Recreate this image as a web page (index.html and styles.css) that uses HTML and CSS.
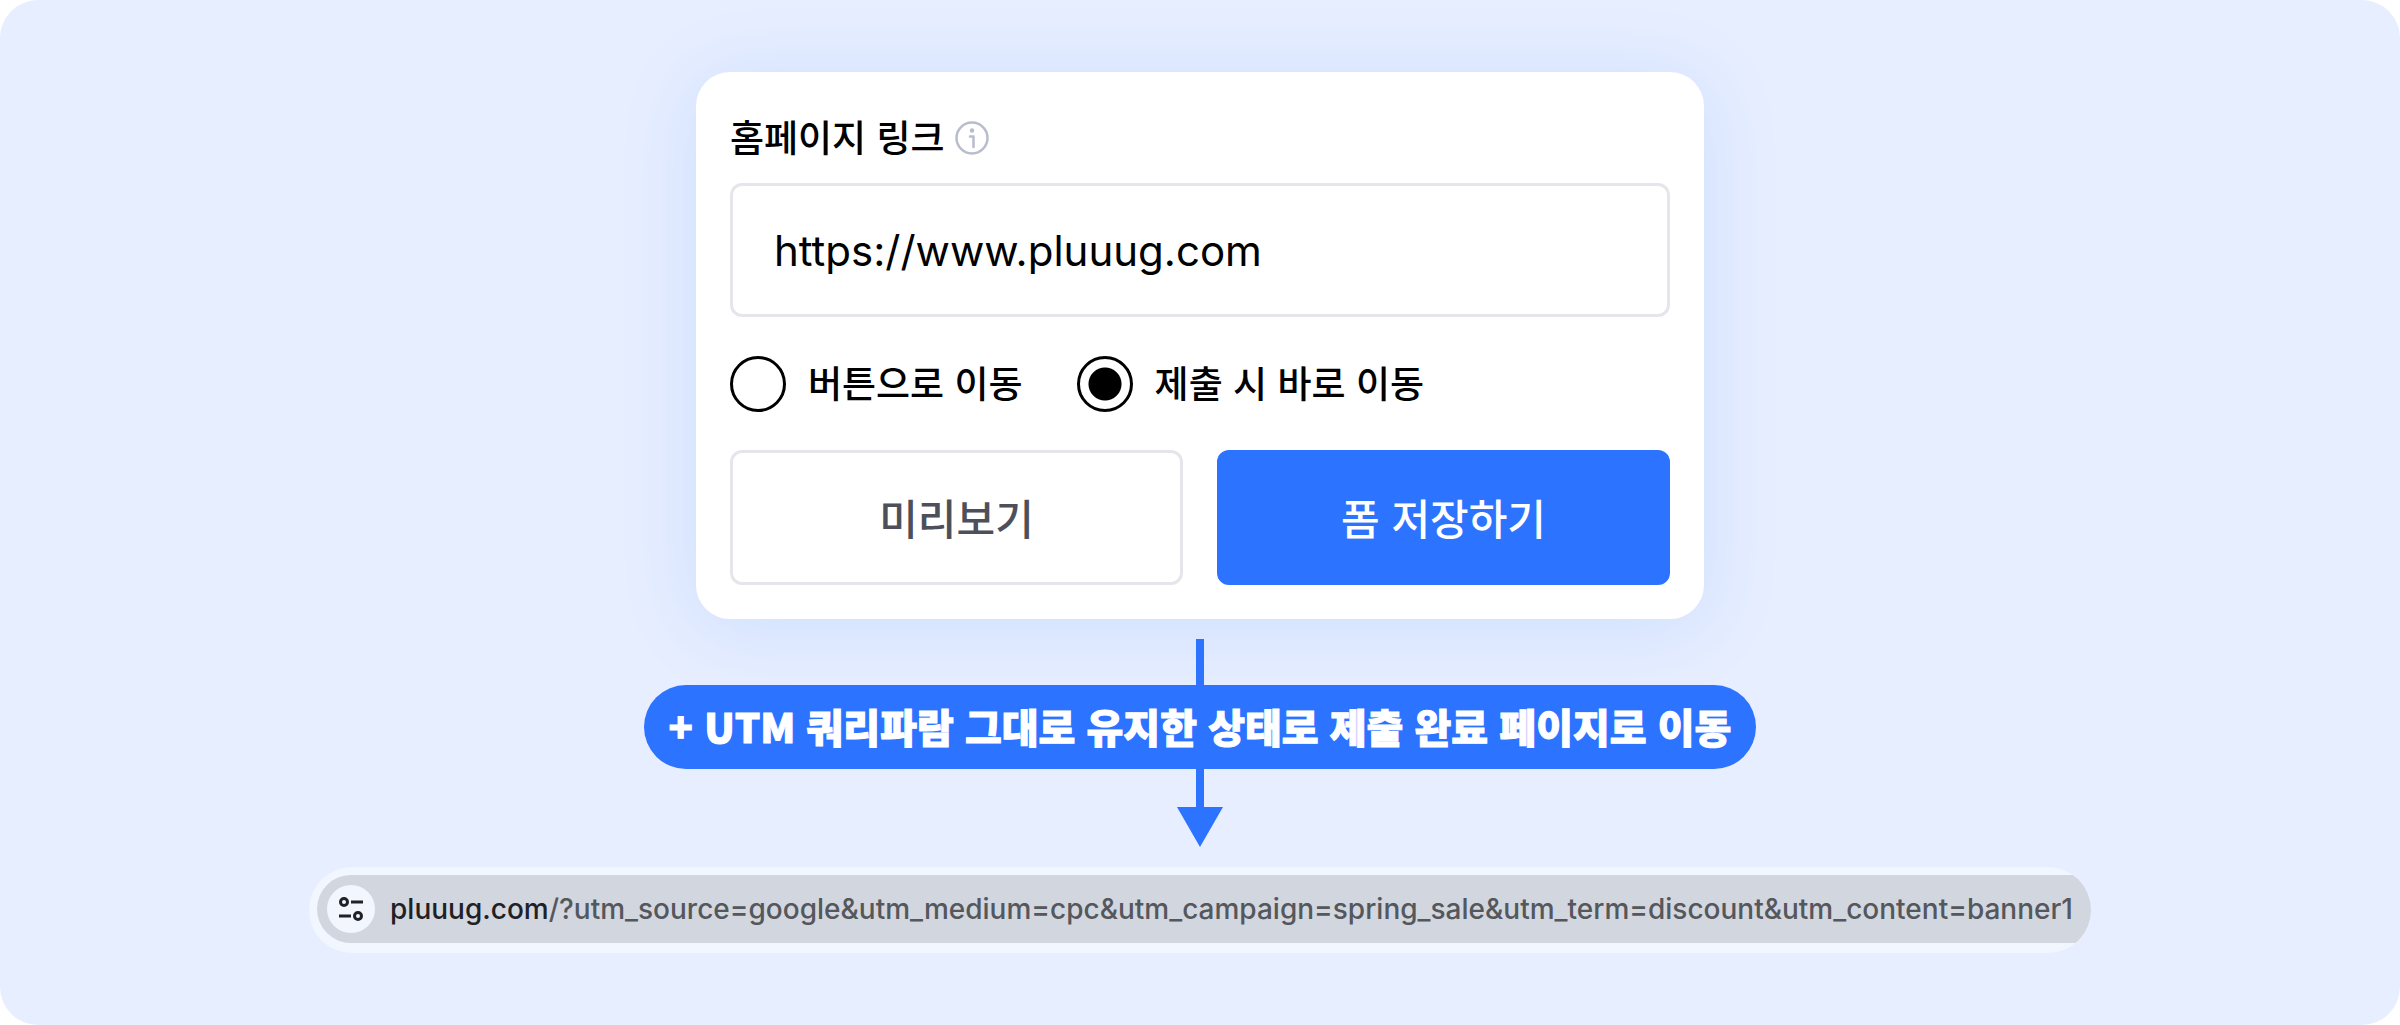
FILE: index.html
```
<!DOCTYPE html>
<html lang="ko">
<head>
<meta charset="UTF-8">
<title>홈페이지 링크</title>
<link rel="stylesheet" href="styles.css">
</head>
<body>
    <main class="panel">
        <form class="card">
            <div class="label-row">
                <label for="homepage">홈페이지 링크</label>
                <svg class="info-icon" viewBox="0 0 34 34" fill="none" stroke="#b8bdcc" stroke-width="2.5" stroke-linecap="round" stroke-linejoin="round">
                    <circle cx="17" cy="17" r="15.5"/>
                    <path d="M15 15.5h3.5V26"/>
                    <circle cx="17" cy="9.5" r="2.2" fill="#b8bdcc" stroke="none"/>
                </svg>
            </div>
            <input type="text" class="text-input" id="homepage" value="https://www.pluuug.com">

            <div class="radio-row">
                <label class="radio"><input type="radio" name="move" value="button"><span>버튼으로 이동</span></label>
                <label class="radio"><input type="radio" name="move" value="direct" checked><span>제출 시 바로 이동</span></label>
            </div>

            <div class="button-row">
                <button type="button" class="button">미리보기</button>
                <button type="button" class="button primary">폼 저장하기</button>
            </div>
        </form>

        <div class="flow">
            <div class="line"></div>
            <p class="pill">+ UTM 쿼리파람 그대로 유지한 상태로 제출 완료 페이지로 이동</p>
            <div class="line short"></div>
            <div class="arrow-head"></div>
        </div>

        <div class="address-bar">
            <div class="address">
                <span class="site-icon">
                    <svg viewBox="0 0 24 26" fill="none" stroke="#202226" stroke-width="3">
                        <circle cx="5" cy="6" r="3.5"/>
                        <path d="M12 6h12M0 20h12"/>
                        <circle cx="19" cy="20" r="3.5"/>
                    </svg>
                </span>
                <span class="url"><span class="host">pluuug.com</span>/?utm_source=google&amp;utm_medium=cpc&amp;utm_campaign=spring_sale&amp;utm_term=discount&amp;utm_content=banner1</span>
            </div>
        </div>
    </main>
</body>
</html>
```

FILE: styles.css
```
* {
    box-sizing: border-box;
}
body {
    margin: 0;
    background-color: white;
    font-family: Inter, "Noto Sans CJK KR", sans-serif;
    color: black;
}
.panel {
    min-height: 100vh;
    padding: 72px 24px;
    background-color: #e7eeff;
    border-radius: 38px;
    display: flex;
    flex-direction: column;
    align-items: center;
}

/* form card */
.card {
    width: 100%;
    max-width: 1008px;
    padding: 39px 34px 34px;
    background-color: white;
    border-radius: 34px;
    box-shadow: 0 8px 80px rgba(44, 125, 255, 0.14);
}
.label-row {
    display: flex;
    align-items: center;
    gap: 10px;
    margin-bottom: 18px;
}
.label-row label,
.radio span {
    padding-bottom: 4px;
    font-family: "Noto Sans CJK KR", sans-serif;
    font-size: 37px;
    font-weight: 500;
    line-height: 50px;
}
.info-icon {
    width: 34px;
    height: 34px;
}
.text-input {
    display: block;
    width: 100%;
    height: 134px;
    padding: 0 41px;
    border: 3px solid #e5e6ec;
    border-radius: 12px;
    font-family: inherit;
    font-size: 42px;
    color: black;
}
.radio-row {
    display: flex;
    gap: 54px;
    margin: 39px 0 38px;
}
.radio {
    display: flex;
    align-items: center;
    gap: 22px;
}
.radio input {
    appearance: none;
    width: 56px;
    height: 56px;
    margin: 0;
    border: 3px solid black;
    border-radius: 50%;
}
.radio input:checked {
    background: radial-gradient(circle, black 16px, white 17px);
}
.button-row {
    display: flex;
    gap: 34px;
}
.button {
    flex: 1;
    height: 135px;
    padding: 0 0 3px;
    border: 3px solid #e5e6ec;
    border-radius: 12px;
    background-color: white;
    font-family: "Noto Sans CJK KR", sans-serif;
    font-size: 42px;
    font-weight: 500;
    color: #4d505a;
    cursor: pointer;
}
.button.primary {
    border-color: #2c73ff;
    background-color: #2c73ff;
    color: white;
}

/* arrow between the card and the address bar */
.flow {
    display: flex;
    flex-direction: column;
    align-items: center;
    margin: 20px 0;
}
.line {
    width: 8px;
    height: 46px;
    background-color: #2c73ff;
}
.line.short {
    height: 38px;
}
.pill {
    margin: 0;
    padding: 0 25px 2px;
    background-color: #2c73ff;
    border-radius: 42px;
    font-family: "Noto Sans CJK KR", sans-serif;
    font-size: 40px;
    font-weight: 900;
    line-height: 82px;
    color: white;
    -webkit-text-stroke: 1px white;
}
.arrow-head {
    width: 46px;
    height: 40px;
    background-color: #2c73ff;
    clip-path: polygon(0 0, 100% 0, 50% 100%);
}

/* browser address bar */
.address-bar {
    padding: 8px 0 10px 8px;
    background-color: #f1f6ff;
    border-radius: 43px;
    overflow: hidden;
}
.address {
    display: flex;
    align-items: center;
    gap: 15px;
    height: 68px;
    padding: 0 18px 0 10px;
    background-color: #d2d6df;
    border-radius: 34px 0 0 34px;
}
.site-icon {
    display: flex;
    align-items: center;
    justify-content: center;
    width: 48px;
    height: 48px;
    border-radius: 50%;
    background-color: #f1f6ff;
}
.site-icon svg {
    width: 24px;
    height: 26px;
}
.url {
    font-size: 28px;
    font-weight: 500;
    color: #54575c;
}
.host {
    color: #1f2125;
}
```
